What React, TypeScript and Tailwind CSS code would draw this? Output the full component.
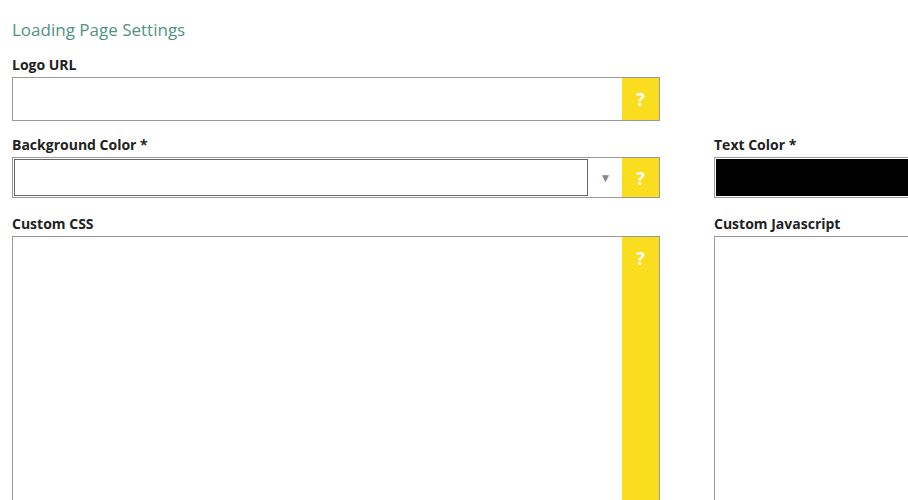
import React from "react";

const font = { fontFamily: '"Open Sans", "Liberation Sans", sans-serif' };

function Help({ top = false }: { top?: boolean }) {
  return (
    <div
      className={`w-[37px] shrink-0 bg-[#fbdd1f] flex justify-center ${top ? "items-start pt-[12px]" : "items-center"}`}
    >
      <span className="text-white font-bold text-[18px] leading-none">?</span>
    </div>
  );
}

function Label({ children }: { children: React.ReactNode }) {
  return <div className="text-[14px] font-bold text-[#222] leading-[20px] h-[20px] mb-[2px]">{children}</div>;
}

export default function App() {
  return (
    <div className="w-[908px] h-[500px] overflow-hidden bg-white" style={font}>
      <div className="pl-[12px] pt-[18px] w-[1400px]">
        <div className="text-[17px] text-[#4f9482] leading-[24px] h-[24px]">Loading Page Settings</div>
        <div className="grid grid-cols-[648px_648px] gap-x-[54px] mt-[13px]">
          <div>
            <Label>Logo URL</Label>
            <div className="flex h-[44px] border border-[#999]">
              <div className="flex-1" />
              <Help />
            </div>
          </div>
          <div />
          <div className="mt-[14px]">
            <Label>Background Color *</Label>
            <div className="flex h-[41px] border border-[#999]">
              <div className="flex-1 m-px border border-[#666]" />
              <div className="w-[33px] flex items-center justify-center text-[#888] text-[12px]">▼</div>
              <Help />
            </div>
          </div>
          <div className="mt-[14px]">
            <Label>Text Color *</Label>
            <div className="h-[41px] border border-[#999] p-px">
              <div className="h-full bg-black" />
            </div>
          </div>
          <div className="mt-[16px]">
            <Label>Custom CSS</Label>
            <div className="flex h-[300px] border border-[#999]">
              <div className="flex-1" />
              <Help top />
            </div>
          </div>
          <div className="mt-[16px]">
            <Label>Custom Javascript</Label>
            <div className="h-[300px] border border-[#999]" />
          </div>
        </div>
      </div>
    </div>
  );
}
